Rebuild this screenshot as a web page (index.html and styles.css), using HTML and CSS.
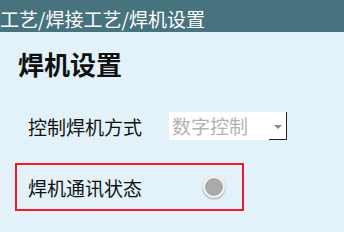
FILE: index.html
```html
<!DOCTYPE html>
<html lang="zh-CN">
<head>
    <meta charset="UTF-8">
    <title>焊机设置</title>
    <link rel="stylesheet" href="styles.css">
</head>
<body>
    <div class="crumb">工艺/焊接工艺/焊机设置</div>
    <h1 class="title">焊机设置</h1>
    <div class="row">
        <span class="label">控制焊机方式</span>
        <div class="select">
            <span class="select-text">数字控制</span>
            <span class="select-btn"><span class="arrow"></span></span>
        </div>
    </div>
    <div class="row status">
        <span class="label">焊机通讯状态</span>
        <span class="lamp"></span>
    </div>
</body>
</html>
```
FILE: styles.css
```css
body {
    margin: 0;
    width: 344px;
    height: 232px;
    overflow: hidden;
    background: #e2f2f8;
    font-family: "Noto Sans CJK SC", sans-serif;
    color: #111;
}
.crumb {
    height: 32px;
    line-height: 38px;
    background: #47737f;
    color: #fff;
    font-size: 19px;
    white-space: nowrap;
}
.title {
    margin: 14px 0 0 18px;
    font-size: 26px;
    line-height: 36px;
    font-weight: bold;
}
.row {
    display: flex;
    align-items: center;
    margin: 30px 0 0 28px;
    height: 28px;
}
.label {
    font-size: 19px;
    width: 141px;
}
.select {
    display: flex;
    width: 118px;
    height: 28px;
    background: #fff;
    border-right: 1px solid #222;
    box-sizing: border-box;
}
.select-text {
    flex: 1;
    padding-left: 3px;
    font-size: 19px;
    line-height: 28px;
    color: #b3b3b3;
}
.select-btn {
    width: 17px;
    display: flex;
    align-items: center;
    justify-content: center;
    border-bottom: 1px solid #222;
    box-sizing: border-box;
}
.arrow {
    width: 0;
    height: 0;
    border-left: 4px solid transparent;
    border-right: 4px solid transparent;
    border-top: 4px solid #888;
    margin-top: 2px;
}
.status {
    margin: 23px 0 0 15px;
    width: 229px;
    height: 48px;
    border: 2px solid #ee1c24;
    box-sizing: border-box;
    padding-left: 11px;
}
.status .label {
    width: 175px;
}
.lamp {
    width: 22px;
    height: 22px;
    border-radius: 50%;
    background: #aaa;
    border: 2px solid #f4f4f4;
    box-sizing: border-box;
    box-shadow: 0 1px 2px rgba(0, 0, 0, 0.35);
}
```
